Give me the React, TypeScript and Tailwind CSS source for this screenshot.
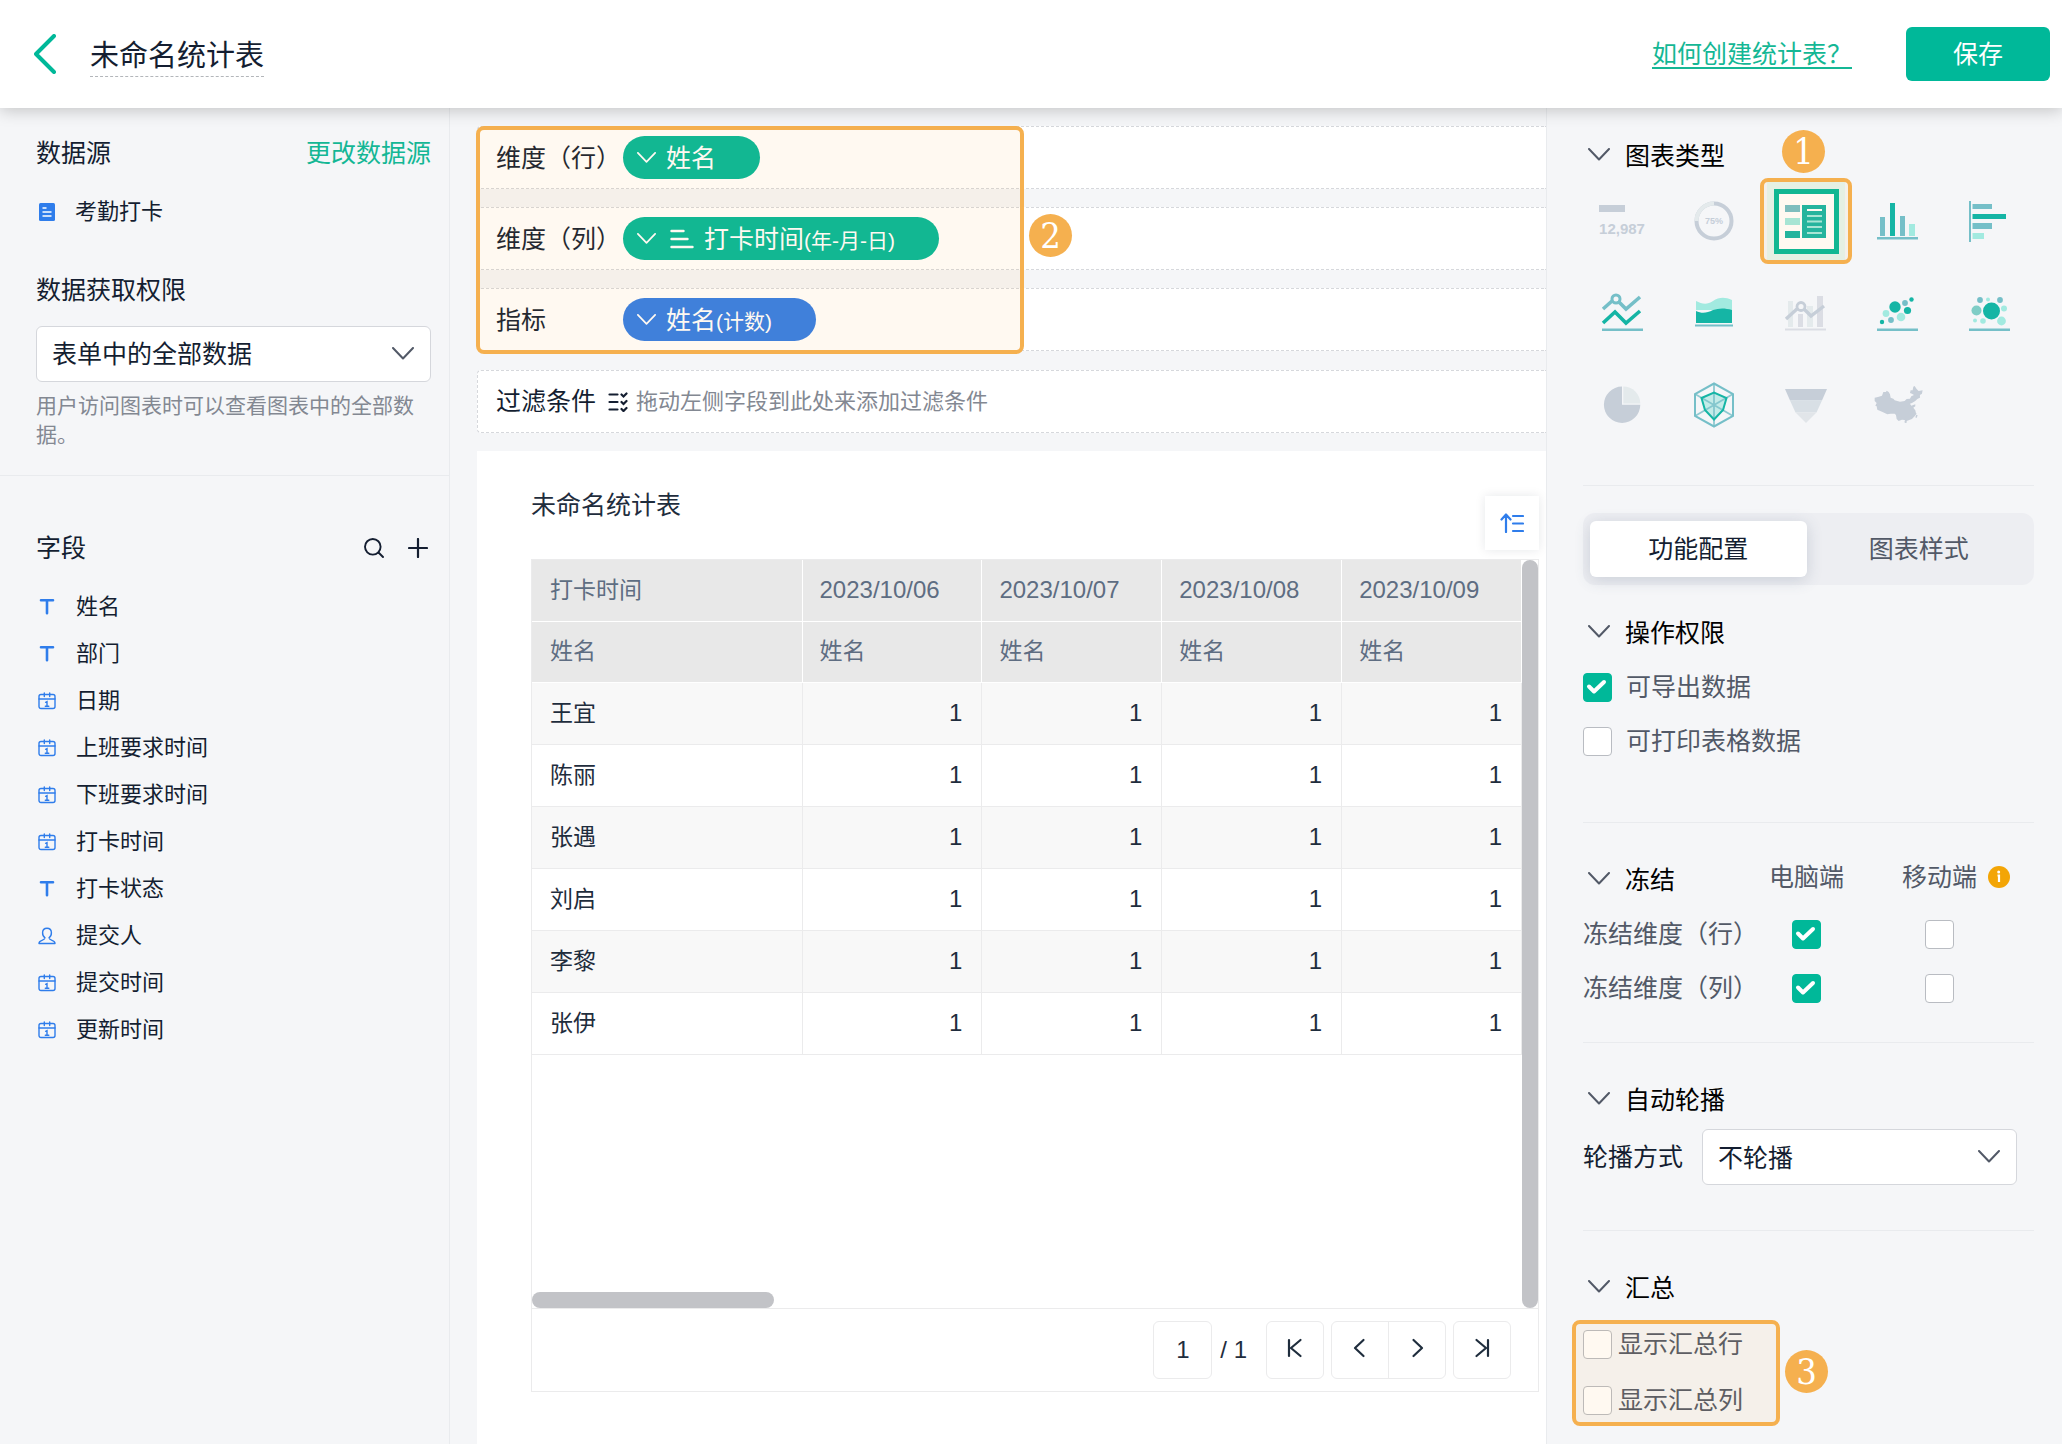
import type { ReactNode } from "react";
import clsx from "clsx";

type FieldKind = "text" | "date" | "user";

const fields: { name: string; kind: FieldKind }[] = [
    { name: "姓名", kind: "text" },
    { name: "部门", kind: "text" },
    { name: "日期", kind: "date" },
    { name: "上班要求时间", kind: "date" },
    { name: "下班要求时间", kind: "date" },
    { name: "打卡时间", kind: "date" },
    { name: "打卡状态", kind: "text" },
    { name: "提交人", kind: "user" },
    { name: "提交时间", kind: "date" },
    { name: "更新时间", kind: "date" },
];

const dates = ["2023/10/06", "2023/10/07", "2023/10/08", "2023/10/09"];
const people = ["王宜", "陈丽", "张遇", "刘启", "李黎", "张伊"];

function ChevronDown({ className }: { className?: string }) {
    return (
        <svg viewBox="0 0 22 13" fill="none" stroke="currentColor" strokeWidth="2" strokeLinecap="round" strokeLinejoin="round" className={className}>
            <path d="M1 1l10 10.5L21 1" />
        </svg>
    );
}

function FieldIcon({ kind }: { kind: FieldKind }) {
    if (kind === "text") {
        return (
            <svg width="18" height="18" viewBox="0 0 18 18" fill="none" stroke="#2f7deb" strokeWidth="2.6" strokeLinecap="round">
                <path d="M3 2.300h12M9 2.300v13" />
            </svg>
        );
    }
    if (kind === "user") {
        return (
            <svg width="18" height="18" viewBox="0 0 18 18" fill="none" stroke="#2f7deb" strokeWidth="1.4" strokeLinejoin="round">
                <path d="M7 10.8C5 9.500 4.500 7.500 4.600 5.500 4.700 3 6.500 1.200 9 1.200s4.300 1.800 4.400 4.300c.1 2-.4 4-2.400 5.300.1 1.600 1.400 2 3 2.500 1.800.6 3 1.300 3 3.200H1c0-1.900 1.200-2.600 3-3.200 1.600-.5 2.900-.9 3-2.500z" />
            </svg>
        );
    }
    return (
        <svg width="18" height="18" viewBox="0 0 18 18" fill="none" stroke="#2f7deb" strokeWidth="1.400" strokeLinecap="round">
            <rect x="1" y="2.500" width="16" height="14" rx="2" />
            <path d="M1 7h16M6.300 1v3.500M11.700 1v3.500M7.600 10.300L9 9.600V14.200M7.300 14.200h3.500" />
        </svg>
    );
}

function Callout({ n, className }: { n: number; className: string }) {
    return (
        <span className={clsx("absolute z-20 flex h-[43px] w-[43px] items-center justify-center rounded-full bg-[#f5b04f] font-['DejaVu_Serif_Condensed','DejaVu_Serif',serif] text-4xl leading-none text-white", className)}>
            {n}
        </span>
    );
}

function Highlight({ className }: { className: string }) {
    return <div className={clsx("pointer-events-none absolute z-10 rounded-lg border-4 border-[#f5b04f] bg-[#ffaa37]/7", className)} />;
}

function Check({ id, checked = false, label }: { id: string; checked?: boolean; label?: string }) {
    return (
        <span className="relative flex h-[29px] w-[29px] shrink-0">
            <input
                id={id}
                type="checkbox"
                defaultChecked={checked}
                aria-label={label}
                className="peer h-full w-full appearance-none rounded border border-[#b9bcc2] bg-white checked:border-[#00b899] checked:bg-[#00b899]"
            />
            <svg viewBox="0 0 29 29" fill="none" stroke="#fff" strokeWidth="4" strokeLinecap="round" strokeLinejoin="round" className="pointer-events-none absolute inset-0 hidden peer-checked:block">
                <path d="M6 13.500l5 5 10-9.500" />
            </svg>
        </span>
    );
}

function Dropdown({ id, value, className }: { id: string; value: string; className?: string }) {
    return (
        <div className={clsx("relative text-[#141e31]", className)}>
            <select id={id} defaultValue={value} className="h-14 w-full appearance-none rounded-md border border-[#d5d7dc] bg-white px-[15px] pt-0.5 text-[25px]">
                <option>{value}</option>
            </select>
            <ChevronDown className="pointer-events-none absolute right-[17px] top-[21px] w-[22px] text-[#525967]" />
        </div>
    );
}

function SectionTitle({ children }: { children: ReactNode }) {
    return (
        <h2>
            <button type="button" className="flex items-center text-[25px] leading-9 text-black">
                <ChevronDown className="mb-1 ml-[5px] mr-[15px] w-[22px] text-[#525967]" />
                {children}
            </button>
        </h2>
    );
}

function Chip({ name, suffix, blue, sorted }: { name: string; suffix?: string; blue?: boolean; sorted?: boolean }) {
    return (
        <button type="button" className={clsx("flex h-[43px] items-center rounded-full pl-[14px] pr-11 text-white", blue ? "bg-[#327de7]" : "bg-[#00b899]")}>
            <ChevronDown className="mr-2.5 w-[19px]" />
            {sorted && (
                <svg width="24" height="20" viewBox="0 0 24 20" stroke="currentColor" strokeWidth="2.400" strokeLinecap="round" className="ml-1 mr-2.5">
                    <path d="M1.500 2h12M1.500 10h16M1.500 18h21" />
                </svg>
            )}
            <span className="pt-0.5 text-[25px]">
                {name}
                {suffix && <span className="text-[21px]">{suffix}</span>}
            </span>
        </button>
    );
}

function DropRow({ children }: { children: ReactNode }) {
    return (
        <div className="flex h-[63px] items-center rounded-l border border-r-0 border-dashed border-[#d6d8dc] bg-white pl-[18px] text-[25px] text-[#141e31]">
            {children}
        </div>
    );
}

/* chart type icons, drawn on a 48 x 48 grid */
const chartTypes: { name: string; icon: ReactNode; active?: boolean }[] = [
    {
        name: "指标图",
        icon: (
            <>
                <path d="M1 8h26v7H1z" fill="#c6ced8" />
                <text x="24" y="37" textAnchor="middle" fill="#c6ced8" className="text-[15px] font-bold">
                    12,987
                </text>
            </>
        ),
    },
    {
        name: "进度图",
        icon: (
            <>
                <circle cx="24" cy="24" r="17.500" fill="none" stroke="#c6ced8" strokeWidth="4" />
                <path d="M6.500 24A17.500 17.500 0 0 1 24 6.500" fill="none" stroke="#e4eaec" strokeWidth="4" />
                <text x="24" y="27" textAnchor="middle" fill="#c6ced8" className="text-[9px] font-bold">
                    75%
                </text>
            </>
        ),
    },
    {
        name: "统计表",
        active: true,
        icon: (
            <>
                <path d="M3 8h15v7H3z" fill="#75bfc8" />
                <path d="M3 21h15v7H3z" fill="#a2eae0" />
                <path d="M3 34h15v7H3zM20 8h24v33H20z" fill="#15b5a5" />
                <path d="M25 13h15" stroke="#fff" strokeWidth="2" />
                <path d="M25 19h15M25 24.500h15M25 30h15M25 36h15" stroke="#a2eae0" strokeWidth="2" />
            </>
        ),
    },
    {
        name: "柱形图",
        icon: (
            <>
                <path d="M6 20h5v19H6zM26 19h5v20h-5zM3 40h41v2.500H3z" fill="#75bfc8" />
                <path d="M16 6h5v33h-5z" fill="#15b5a5" />
                <path d="M35 27h6v12h-6z" fill="#a2eae0" />
            </>
        ),
    },
    {
        name: "条形图",
        icon: (
            <>
                <path d="M3 4h2v41H3zM6.500 7H26v5H6.500zM6.500 26H26v6H6.500z" fill="#75bfc8" />
                <path d="M6.500 17H40v5H6.500z" fill="#15b5a5" />
                <path d="M6.500 36H18v6H6.500z" fill="#a2eae0" />
            </>
        ),
    },
    {
        name: "折线图",
        icon: (
            <>
                <path d="M5 20L14 12M20 12l8 8 14-12" fill="none" stroke="#75bfc8" strokeWidth="3.600" />
                <circle cx="18" cy="10" r="4" fill="none" stroke="#75bfc8" strokeWidth="3" />
                <path d="M5 34l12-11 11 11 14-12" fill="none" stroke="#15b5a5" strokeWidth="3.600" />
                <path d="M4 39.500h41V42H4z" fill="#75bfc8" />
            </>
        ),
    },
    {
        name: "面积图",
        icon: (
            <>
                <path d="M6 12c6 3 11 4 17 0 6-4 12-4 19-1v10H6z" fill="#a2eae0" />
                <path d="M6 22c6 3 11 2 17-1 6-2 12-2 19 0v13H6z" fill="#15b5a5" />
                <path d="M5 35.500h38v2H5z" fill="#75bfc8" />
            </>
        ),
    },
    {
        name: "双轴图",
        icon: (
            <>
                <path d="M6 12h5v26H6zM25 17h6v21h-6z" fill="#e4eaec" />
                <path d="M16 25h5v13h-5zM35 7h6v31h-6zM3 39.500h41v2H3z" fill="#dbdde4" />
                <path d="M4 30l12-11M22 20l7 7 13-10" fill="none" stroke="#c6ced8" strokeWidth="3.400" />
                <circle cx="19" cy="17.500" r="4" fill="none" stroke="#c6ced8" strokeWidth="2.800" />
            </>
        ),
    },
    {
        name: "散点图",
        icon: (
            <>
                <path d="M3 39.500h41V42H3z" fill="#75bfc8" />
                <g fill="#15b5a5">
                    <circle cx="21" cy="18" r="5.700" />
                    <circle cx="33.500" cy="21.500" r="3.600" />
                    <circle cx="37.500" cy="10.500" r="2.200" />
                    <circle cx="8" cy="33" r="2.200" />
                </g>
                <g fill="#a2eae0">
                    <circle cx="12" cy="24.500" r="3.400" />
                    <circle cx="27" cy="28" r="4.300" />
                </g>
                <g fill="#75bfc8">
                    <circle cx="31" cy="14" r="2.900" />
                    <circle cx="17" cy="31" r="2.900" />
                </g>
            </>
        ),
    },
    {
        name: "气泡图",
        icon: (
            <>
                <path d="M3 39.500h41V42H3z" fill="#75bfc8" />
                <circle cx="25.500" cy="22" r="8.500" fill="#15b5a5" />
                <circle cx="10.500" cy="21.500" r="5" fill="#7fcdc6" />
                <g fill="#75bfc8">
                    <circle cx="14" cy="11" r="2.900" />
                    <circle cx="34" cy="11" r="2.900" />
                </g>
                <g fill="#a2eae0">
                    <circle cx="22" cy="10.500" r="2" />
                    <circle cx="38" cy="19.500" r="3" />
                    <circle cx="35.500" cy="32" r="4.400" />
                    <circle cx="17" cy="32" r="2.800" />
                    <circle cx="9" cy="31.500" r="2" />
                </g>
            </>
        ),
    },
    {
        name: "饼图",
        icon: (
            <>
                <path d="M24 5.500v18.300H42.300A18.200 18.200 0 1 1 24 5.500z" fill="#c6ced8" />
                <path d="M25.300 5.500A17 17 0 0 1 42.300 22.500h-17z" fill="#e4eaec" />
            </>
        ),
    },
    {
        name: "雷达图",
        icon: (
            <>
                <path d="M24 2.500L43 13v22L24 45.500 5 35V13z" fill="none" stroke="#75bfc8" strokeWidth="2" />
                <path d="M11.500 17L24 11.500 36.500 17 34 29 24 38.500 14 29z" fill="#c3ebe8" />
                <path d="M24 2.500v43M5 13l38 22M43 13L5 35" stroke="#75bfc8" strokeWidth="1.800" opacity=".8" />
                <path d="M11.500 17L24 11.500 36.500 17 33 29 24 38.500 15 29z" fill="none" stroke="#15b5a5" strokeWidth="2" />
            </>
        ),
    },
    {
        name: "漏斗图",
        icon: (
            <>
                <path d="M3 8h42L40 19.500H8z" fill="#c6ced8" />
                <path d="M8 19.500h32l-5.500 12H13.500z" fill="#d8dfe5" />
                <path d="M13.500 31.500h21L24 42z" fill="#e1e5e9" />
            </>
        ),
    },
    {
        name: "地图",
        icon: (
            <g transform="scale(.333)" fill="#c6ced8">
                <path d="M2 50L12 48 24 44 28 33 36 33 38 29 44 33 48 40 50 50 58 53 62 58 78 62 92 60 98 54 108 53 112 46 120 42 114 38 108 36 110 28 116 28 118 17 122 15 128 24 134 30 146 28 144 38 138 42 138 50 130 54 124 60 114 66 108 68 112 74 124 70 124 76 118 80 124 88 126 96 128 98 122 106 114 114 104 118 98 120 94 122 92 117 84 116 74 120 68 114 66 102 62 98 50 98 40 100 24 92 10 86 8 76 4 74 8 66 2 60z" />
                <circle cx="95" cy="123" r="3.500" />
                <path d="M127 101l4 2-3 8-4-2z" />
            </g>
        ),
    },
];

function Header() {
    return (
        <header className="relative z-30 flex h-[108px] items-center bg-white pl-[34px] pr-3 shadow-[0_2px_16px_rgba(0,0,0,0.22)]">
            <button type="button" aria-label="返回" className="mr-[34px]">
                <svg width="22" height="40" viewBox="0 0 22 40" fill="none" stroke="#00b899" strokeWidth="4" strokeLinecap="round" strokeLinejoin="round">
                    <path d="M20 2L2 20l18 18" />
                </svg>
            </button>
            <h1 className="border-b border-dashed border-[#b3b6ba] pt-1 text-[29px] leading-[40px] text-[#141e31]">未命名统计表</h1>
            <a href="#help" className="ml-auto mr-[54px] pt-0.5 text-[25px] text-[#14b795] underline underline-offset-4">如何创建统计表？</a>
            <button type="button" className="h-[54px] w-36 rounded-md bg-[#00b899] pt-0.5 text-[25px] text-white">保存</button>
        </header>
    );
}

function Sidebar() {
    return (
        <aside className="w-[450px] shrink-0 border-r border-[#e9ebee] text-[#141e31]">
            <section className="border-b border-[#e9ebee] pb-[26px] pl-9 pr-[18px] pt-[27px]">
                <div className="flex items-center justify-between text-[25px] leading-9">
                    <h2>数据源</h2>
                    <button type="button" className="text-[#14b795]">更改数据源</button>
                </div>
                <p className="mt-[26px] flex items-center gap-5 pl-[3px] text-[22px] leading-[30px]">
                    <svg width="16" height="18" viewBox="0 0 16 18">
                        <rect width="16" height="18" rx="1.500" fill="#2f7deb" />
                        <path d="M3.500 5h4M3.500 9h9M3.500 13h9" stroke="#fff" strokeWidth="1.300" />
                    </svg>
                    考勤打卡
                </p>
                <label htmlFor="scope" className="mt-[45px] block text-[25px] leading-9">数据获取权限</label>
                <Dropdown id="scope" value="表单中的全部数据" className="mt-[18px]" />
                <p className="mt-[9px] text-[21px] leading-[29px] text-[#838892]">用户访问图表时可以查看图表中的全部数据。</p>
            </section>
            <section className="pl-9 pr-[18px] pt-[54px]">
                <div className="flex items-center">
                    <h2 className="flex-1 text-[25px] leading-9">字段</h2>
                    <button type="button" aria-label="搜索字段" className="mr-6">
                        <svg width="20" height="20" viewBox="0 0 20 20" fill="none" stroke="currentColor" strokeWidth="1.900" strokeLinecap="round">
                            <circle cx="8.800" cy="8.800" r="7.800" />
                            <path d="M14.500 14.500L19 19" />
                        </svg>
                    </button>
                    <button type="button" aria-label="添加字段" className="mr-[3px]">
                        <svg width="20" height="20" viewBox="0 0 20 20" stroke="currentColor" strokeWidth="2.200" strokeLinecap="round">
                            <path d="M10 1v18M1 10h18" />
                        </svg>
                    </button>
                </div>
                <ul className="mt-[17px] pl-0.5">
                    {fields.map((field) => (
                        <li key={field.name} className="flex h-[47px] items-center gap-5 text-[22px]">
                            <FieldIcon kind={field.kind} />
                            {field.name}
                        </li>
                    ))}
                </ul>
            </section>
        </aside>
    );
}

function PivotTable() {
    return (
        <table className="w-full table-fixed border-collapse text-[23px] text-[#1f2d3d]">
            <colgroup>
                <col className="w-[270px]" />
                {dates.map((date) => <col key={date} />)}
            </colgroup>
            <thead className="bg-[#e8e8e8] text-left text-[#5e6d82]">
                <tr className="h-[61px]">
                    <th scope="col" className="border-b border-r border-white pl-[18px] font-normal">打卡时间</th>
                    {dates.map((date) => (
                        <th key={date} scope="col" className="border-b border-r border-white pl-[17px] text-2xl font-normal">{date}</th>
                    ))}
                </tr>
                <tr className="h-[61px]">
                    <th scope="col" className="border-b border-r border-white pl-[18px] font-normal">姓名</th>
                    {dates.map((date) => (
                        <th key={date} scope="col" className="border-b border-r border-white pl-[17px] font-normal">姓名</th>
                    ))}
                </tr>
            </thead>
            <tbody>
                {people.map((person) => (
                    <tr key={person} className="h-[62px] odd:bg-[#f8f8f8]">
                        <th scope="row" className="border-b border-r border-[#ebebec] pl-[18px] text-left font-normal">{person}</th>
                        {dates.map((date) => (
                            <td key={date} className="border-b border-r border-[#ebebec] pr-[19px] text-right text-2xl">1</td>
                        ))}
                    </tr>
                ))}
            </tbody>
        </table>
    );
}

function PageIcon({ d }: { d: string }) {
    return (
        <svg width="18" height="20" viewBox="0 0 18 20" fill="none" stroke="#1f2d3d" strokeWidth="2.200" strokeLinecap="round" strokeLinejoin="round" className="mx-auto mb-1">
            <path d={d} />
        </svg>
    );
}

function Pagination() {
    return (
        <div className="flex h-[83px] items-center justify-end border-t border-[#ebebec] pr-[27px] text-2xl text-[#1f2d3d]">
            <input aria-label="页码" defaultValue="1" className="h-[58px] w-[59px] rounded-md border border-[#ebebec] text-center" />
            <span className="ml-2 mr-[19px]">/ 1</span>
            <button type="button" aria-label="第一页" className="h-[58px] w-[58px] rounded-md border border-[#ebebec]">
                <PageIcon d="M3 2v16M14.500 2L5 10l9.500 8" />
            </button>
            <div className="mx-[7px] flex h-[58px] rounded-md border border-[#ebebec]">
                <button type="button" aria-label="上一页" className="w-[57px] border-r border-[#ebebec]">
                    <PageIcon d="M12.500 2L4 10l8.500 8" />
                </button>
                <button type="button" aria-label="下一页" className="w-14">
                    <PageIcon d="M5.500 2l8.500 8-8.500 8" />
                </button>
            </div>
            <button type="button" aria-label="最后一页" className="h-[58px] w-[58px] rounded-md border border-[#ebebec]">
                <PageIcon d="M15 2v16M3.500 2l9.500 8-9.500 8" />
            </button>
        </div>
    );
}

function Workspace() {
    return (
        <main className="flex min-w-0 flex-1 flex-col pl-[27px] pt-[18px]">
            <div className="relative flex flex-col gap-[18px]">
                <DropRow>
                    <span className="w-[127px] pt-0.5">维度（行）</span>
                    <Chip name="姓名" />
                </DropRow>
                <DropRow>
                    <span className="w-[127px] pt-0.5">维度（列）</span>
                    <Chip name="打卡时间" suffix="(年-月-日)" sorted />
                </DropRow>
                <DropRow>
                    <span className="w-[127px] pt-0.5">指标</span>
                    <Chip name="姓名" suffix="(计数)" blue />
                </DropRow>
                <Highlight className="-left-px top-0 h-[228px] w-[548px]" />
                <Callout n={2} className="left-[552px] top-[88px]" />
            </div>
            <div className="mt-[19px]">
                <DropRow>
                    <span>过滤条件</span>
                    <svg width="20" height="20" viewBox="0 0 20 20" fill="none" stroke="currentColor" strokeWidth="2.200" strokeLinecap="round" className="ml-3 mr-2">
                        <path d="M1.500 2.500h8M1.500 10h8M1.500 17.500h8M13.500 2.500L15.500 4.500l3-3M13.500 10l2 2 3-3M13.500 17l2 2 3-3" />
                    </svg>
                    <span className="text-[22px] text-[#838892]">拖动左侧字段到此处来添加过滤条件</span>
                </DropRow>
            </div>
            <section className="mt-[18px] flex flex-1 flex-col bg-white pb-[52px] pl-[54px] pr-[7px]">
                <div className="flex h-[108px] items-start justify-between">
                    <h2 className="mt-9 text-[25px] leading-9 text-[#1f2d3d]">未命名统计表</h2>
                    <button type="button" aria-label="排序" className="mt-[45px] flex h-[54px] w-[54px] items-center justify-center bg-white shadow-[0_0_10px_rgba(20,30,49,0.1)]">
                        <svg width="24" height="20" viewBox="0 0 24 20" fill="none" stroke="#2f7deb" strokeWidth="2.200" strokeLinecap="round" strokeLinejoin="round">
                            <path d="M6 19V2M1.500 6.500L6 1.500l4.500 5M13 3h10M13 10.500h10M13 18h10" />
                        </svg>
                    </button>
                </div>
                <div className="flex flex-1 flex-col border border-[#ebebec]">
                    <div className="flex flex-1">
                        <div className="flex min-w-0 flex-1 flex-col justify-between">
                            <PivotTable />
                            <div className="h-4 w-[242px] rounded-full bg-[#c2c3c7]" />
                        </div>
                        <div className="w-4 rounded-full bg-[#c2c3c7]" />
                    </div>
                    <Pagination />
                </div>
            </section>
        </main>
    );
}

function SettingsPanel() {
    return (
        <aside className="w-[516px] shrink-0 border-l border-[#e9ebee] pb-[26px] pl-9 pr-7 pt-[30px] text-[25px] leading-9 text-[#525967]">
            <SectionTitle>图表类型</SectionTitle>
            <div className="mt-2 grid grid-cols-[repeat(5,78px)] gap-[14px]">
                {chartTypes.map((chart) => (
                    <div key={chart.name} className={clsx("relative", chart.active && "bg-[#e3f6f2]")}>
                        <button type="button" aria-label={chart.name} className="flex h-[78px] w-[78px] items-center justify-center">
                            <span className={clsx("flex items-center justify-center", chart.active && "h-[65px] w-[65px] border-[5px] border-[#00b899] bg-white")}>
                                <svg width="48" height="48" viewBox="0 0 48 48" className="shrink-0 overflow-visible">{chart.icon}</svg>
                            </span>
                        </button>
                        {chart.active && (
                            <>
                                <Highlight className="-inset-x-[7px] -inset-y-1" />
                                <Callout n={1} className="-top-[52px] left-[15px]" />
                            </>
                        )}
                    </div>
                ))}
            </div>

            <div className="mt-[41px] border-t border-[#e9ebee] pt-[27px]">
                <div role="tablist" className="flex h-[72px] gap-1 rounded-xl bg-[#edeef2] px-[7px] py-2">
                    <button type="button" role="tab" aria-selected="true" className="flex-1 rounded-md bg-white text-[#141e31] shadow-[0_3px_16px_rgba(60,80,110,0.2)]">功能配置</button>
                    <button type="button" role="tab" aria-selected="false" className="flex-1 rounded-md">图表样式</button>
                </div>
            </div>

            <section className="pb-[63px] pt-[30px]">
                <SectionTitle>操作权限</SectionTitle>
                <div className="mt-[18px] flex flex-col gap-[18px]">
                    <label htmlFor="export" className="flex items-center gap-[14px]">
                        <Check id="export" checked />
                        可导出数据
                    </label>
                    <label htmlFor="print" className="flex items-center gap-[14px]">
                        <Check id="print" />
                        可打印表格数据
                    </label>
                </div>
            </section>

            <section className="border-t border-[#e9ebee] pb-9 pt-[39px]">
                <div className="grid grid-cols-[180px_87px_179px] items-center justify-items-center gap-y-[18px]">
                    <div className="justify-self-start">
                        <SectionTitle>冻结</SectionTitle>
                    </div>
                    <span className="self-start leading-[30px]">电脑端</span>
                    <span className="relative self-start leading-[30px]">
                        移动端
                        <svg width="22" height="22" viewBox="0 0 22 22" className="absolute left-full top-1 ml-[11px]">
                            <circle cx="11" cy="11" r="11" fill="#f3a506" />
                            <path d="M9.500 9.500H11V16" fill="none" stroke="#fff" strokeWidth="2.200" />
                            <circle cx="10.700" cy="6" r="1.500" fill="#fff" />
                        </svg>
                    </span>
                    <span className="justify-self-start">冻结维度（行）</span>
                    <Check id="row-pc" checked label="冻结维度（行） 电脑端" />
                    <Check id="row-mobile" label="冻结维度（行） 移动端" />
                    <span className="justify-self-start">冻结维度（列）</span>
                    <Check id="col-pc" checked label="冻结维度（列） 电脑端" />
                    <Check id="col-mobile" label="冻结维度（列） 移动端" />
                </div>
            </section>

            <section className="border-t border-[#e9ebee] pb-[45px] pt-[39px]">
                <SectionTitle>自动轮播</SectionTitle>
                <div className="mt-[11px] flex items-center gap-[19px] pr-[17px]">
                    <label htmlFor="carousel" className="text-[#141e31]">轮播方式</label>
                    <Dropdown id="carousel" value="不轮播" className="flex-1" />
                </div>
            </section>

            <section className="border-t border-[#e9ebee] pt-[39px]">
                <SectionTitle>汇总</SectionTitle>
                <div className="relative mt-5 flex flex-col gap-5">
                    <label htmlFor="sum-row" className="flex items-center gap-1.5">
                        <Check id="sum-row" />
                        显示汇总行
                    </label>
                    <label htmlFor="sum-col" className="flex items-center gap-1.5">
                        <Check id="sum-col" />
                        显示汇总列
                    </label>
                    <Highlight className="-left-[11px] -top-1.5 h-[106px] w-[208px]" />
                    <Callout n={3} className="left-[202px] top-6" />
                </div>
            </section>
        </aside>
    );
}

export default function App() {
    return (
        <div className="flex min-h-screen flex-col bg-[#f5f6f8] font-['Liberation_Sans','Noto_Sans_CJK_SC',sans-serif]" lang="zh-CN">
            <Header />
            <div className="flex flex-1">
                <Sidebar />
                <Workspace />
                <SettingsPanel />
            </div>
        </div>
    );
}
